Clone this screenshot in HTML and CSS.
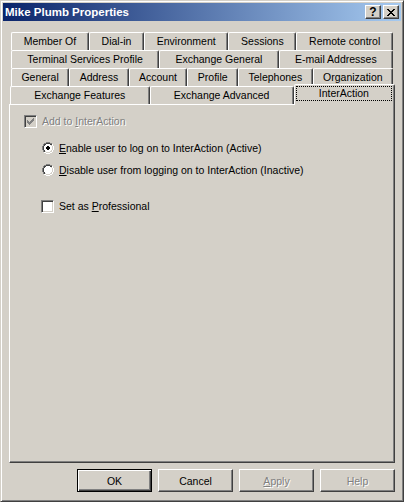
FILE: index.html
```html
<!DOCTYPE html>
<html>
<head>
<meta charset="utf-8">
<title>Mike Plumb Properties</title>
<link rel="stylesheet" href="styles.css">
</head>
<body>
<div class="window">
  <div class="titlebar">
    <span class="title">Mike Plumb Properties</span>
    <div class="cap-btns">
      <div class="cap-btn help">?</div>
      <div class="cap-btn">
        <svg width="8" height="7" viewBox="0 0 8 7" shape-rendering="crispEdges">
          <path fill="#000" d="M0 0h2v1H0z M6 0h2v1H6z M1 1h2v1H1z M5 1h2v1H5z M2 2h4v1H2z M3 3h2v1H3z M2 4h4v1H2z M1 5h2v1H1z M5 5h2v1H5z M0 6h2v1H0z M6 6h2v1H6z"/>
        </svg>
      </div>
    </div>
  </div>

  <div class="body">
    <div class="tabs">
      <div class="tab-row">
        <div class="tab">Member Of</div>
        <div class="tab">Dial-in</div>
        <div class="tab">Environment</div>
        <div class="tab">Sessions</div>
        <div class="tab">Remote control</div>
      </div>
      <div class="tab-row">
        <div class="tab">Terminal Services Profile</div>
        <div class="tab">Exchange General</div>
        <div class="tab">E-mail Addresses</div>
      </div>
      <div class="tab-row">
        <div class="tab">General</div>
        <div class="tab">Address</div>
        <div class="tab">Account</div>
        <div class="tab">Profile</div>
        <div class="tab">Telephones</div>
        <div class="tab">Organization</div>
      </div>
      <div class="tab-row front">
        <div class="tab">Exchange Features</div>
        <div class="tab">Exchange Advanced</div>
        <div class="tab selected"><span class="focus">InterAction</span></div>
      </div>
    </div>

    <div class="panel">
      <div class="opt disabled">
        <span class="checkbox">
          <svg width="7" height="7" viewBox="0 0 7 7" shape-rendering="crispEdges">
            <path fill="#808080" d="M0 2h1v3H0z M1 3h1v3H1z M2 4h1v3H2z M3 3h1v3H3z M4 2h1v3H4z M5 1h1v3H5z M6 0h1v3H6z"/>
          </svg>
        </span>
        <span class="label">Add to <u>I</u>nterAction</span>
      </div>

      <div class="choices">
        <div class="opt radio-opt">
          <svg class="radio" width="12" height="12" viewBox="0 0 12 12" shape-rendering="crispEdges">
            <path fill="#808080" d="M4 0h4v1H4z M2 1h2v1H2z M8 1h2v1H8z M1 2h1v2H1z M0 4h1v4H0z M1 8h1v2H1z"/>
            <path fill="#ffffff" d="M10 2h1v2h-1z M11 4h1v4h-1z M10 8h1v2h-1z M2 10h2v1H2z M8 10h2v1H8z M4 11h4v1H4z"/>
            <path fill="#404040" d="M4 1h4v1H4z M2 2h2v1H2z M8 2h2v1H8z M2 3h1v1H2z M1 4h1v4H1z M2 8h1v2H2z"/>
            <path fill="#d4d0c8" d="M9 3h1v1H9z M10 4h1v4h-1z M9 8h1v1H9z M3 9h1v1H3z M8 9h2v1H8z M4 10h4v1H4z"/>
            <path fill="#ffffff" d="M4 2h4v1H4z M3 3h6v1H3z M2 4h8v4H2z M3 8h6v1H3z M4 9h4v1H4z"/>
            <path fill="#000000" d="M5 4h2v1H5z M4 5h4v2H4z M5 7h2v1H5z"/>
          </svg>
          <span class="label"><u>E</u>nable user to log on to InterAction (Active)</span>
        </div>
        <div class="opt radio-opt second">
          <svg class="radio" width="12" height="12" viewBox="0 0 12 12" shape-rendering="crispEdges">
            <path fill="#808080" d="M4 0h4v1H4z M2 1h2v1H2z M8 1h2v1H8z M1 2h1v2H1z M0 4h1v4H0z M1 8h1v2H1z"/>
            <path fill="#ffffff" d="M10 2h1v2h-1z M11 4h1v4h-1z M10 8h1v2h-1z M2 10h2v1H2z M8 10h2v1H8z M4 11h4v1H4z"/>
            <path fill="#404040" d="M4 1h4v1H4z M2 2h2v1H2z M8 2h2v1H8z M2 3h1v1H2z M1 4h1v4H1z M2 8h1v2H2z"/>
            <path fill="#d4d0c8" d="M9 3h1v1H9z M10 4h1v4h-1z M9 8h1v1H9z M3 9h1v1H3z M8 9h2v1H8z M4 10h4v1H4z"/>
            <path fill="#ffffff" d="M4 2h4v1H4z M3 3h6v1H3z M2 4h8v4H2z M3 8h6v1H3z M4 9h4v1H4z"/>
          </svg>
          <span class="label"><u>D</u>isable user from logging on to InterAction (Inactive)</span>
        </div>
        <div class="opt check-opt">
          <span class="checkbox"></span>
          <span class="label">Set as <u>P</u>rofessional</span>
        </div>
      </div>
    </div>

    <div class="buttons">
      <div class="btn default">OK</div>
      <div class="btn">Cancel</div>
      <div class="btn disabled"><span><u>A</u>pply</span></div>
      <div class="btn disabled">Help</div>
    </div>
  </div>
</div>
</body>
</html>
```

FILE: styles.css
```css
* {
  box-sizing: border-box;
}

html,
body {
  margin: 0;
  padding: 0;
}

body {
  width: 404px;
  height: 502px;
  overflow: hidden;
  background: #d4d0c8;
  color: #000;
  font-family: "Liberation Sans", Arial, sans-serif;
  font-size: 10.5px;
}

u {
  text-decoration: underline;
  text-underline-offset: 1px;
}

/* Dialog frame: classic raised 3D edge */
.window {
  width: 404px;
  height: 502px;
  display: flex;
  flex-direction: column;
  padding: 2px;
  border: 1px solid;
  border-color: #d4d0c8 #404040 #404040 #d4d0c8;
  box-shadow: inset 1px 1px #fff, inset -1px -1px #808080;
}

/* Caption */
.titlebar {
  flex: none;
  height: 18px;
  display: flex;
  align-items: center;
  background: linear-gradient(to right, #0a246a, #a6caf0);
}

.title {
  flex: 1;
  padding-left: 2px;
  color: #fff;
  font-size: 11.5px;
  font-weight: bold;
  line-height: 18px;
  white-space: nowrap;
}

.cap-btns {
  display: flex;
  gap: 2px;
  margin-right: 2px;
}

.cap-btn {
  width: 16px;
  height: 14px;
  display: flex;
  align-items: center;
  justify-content: center;
  background: #d4d0c8;
  border: 1px solid;
  border-color: #fff #404040 #404040 #fff;
  box-shadow: inset -1px -1px #808080;
}

.cap-btn.help {
  font-size: 12px;
  font-weight: bold;
  line-height: 12px;
}

/* Client area */
.body {
  flex: 1;
  display: flex;
  flex-direction: column;
  padding: 11px 6px 7px;
}

/* Multi-row tab strip */
.tabs {
  display: flex;
  flex-direction: column;
}

.tab-row {
  display: flex;
  height: 18px;
  padding: 0 2px;
}

.tab-row.front {
  padding: 0 0 0 1px;
  align-items: flex-end;
}

.tab {
  flex: 1 1 auto;
  height: 18px;
  line-height: 16px;
  text-align: center;
  white-space: nowrap;
  border: 1px solid;
  border-bottom: 0;
  border-color: #fff #404040 transparent #fff;
  border-radius: 2px 2px 0 0;
  box-shadow: inset -1px 0 #808080;
}

.tab.selected {
  position: relative;
  z-index: 1;
  flex-grow: 0.95;
  height: 21px;
  margin-bottom: -1px;
  background: #d4d0c8;
}

.focus {
  display: block;
  margin: 1px 2px 0 1px;
  border: 1px dotted #000;
  line-height: 13px;
}

/* Tab page */
.panel {
  flex: 1;
  display: flex;
  flex-direction: column;
  padding: 10px 0 0 14px;
  border: 1px solid;
  border-color: #fff #404040 #404040 #fff;
  box-shadow: inset -1px -1px #808080;
}

.opt {
  display: flex;
  align-items: flex-start;
  height: 13px;
  line-height: 13px;
  white-space: nowrap;
}

.opt.disabled .label {
  color: #808080;
  text-shadow: 1px 1px 0 #fff;
}

.checkbox {
  flex: none;
  width: 13px;
  height: 13px;
  margin-right: 5px;
  padding: 2px;
  display: flex;
  background: #fff;
  border: 1px solid;
  border-color: #808080 #fff #fff #808080;
  box-shadow: inset 1px 1px #404040, inset -1px -1px #d4d0c8;
}

.opt.disabled .checkbox {
  background: #d4d0c8;
}

.choices {
  display: flex;
  flex-direction: column;
  margin: 14px 0 0 17px;
}

.radio {
  flex: none;
  margin: 0 5px 0 1px;
}

.radio-opt.second {
  margin-top: 9px;
}

.check-opt {
  margin-top: 23px;
}

/* Dialog buttons */
.buttons {
  display: flex;
  justify-content: flex-end;
  gap: 6px;
  margin-top: 6px;
}

.btn {
  width: 75px;
  height: 23px;
  display: flex;
  align-items: center;
  justify-content: center;
  border: 1px solid;
  border-color: #fff #404040 #404040 #fff;
  box-shadow: inset -1px -1px #808080;
}

.btn.default {
  border-color: #000;
  box-shadow: inset 1px 1px #fff, inset -1px -1px #404040, inset -2px -2px #808080;
}

.btn.disabled {
  color: #808080;
  text-shadow: 1px 1px 0 #fff;
}
```
